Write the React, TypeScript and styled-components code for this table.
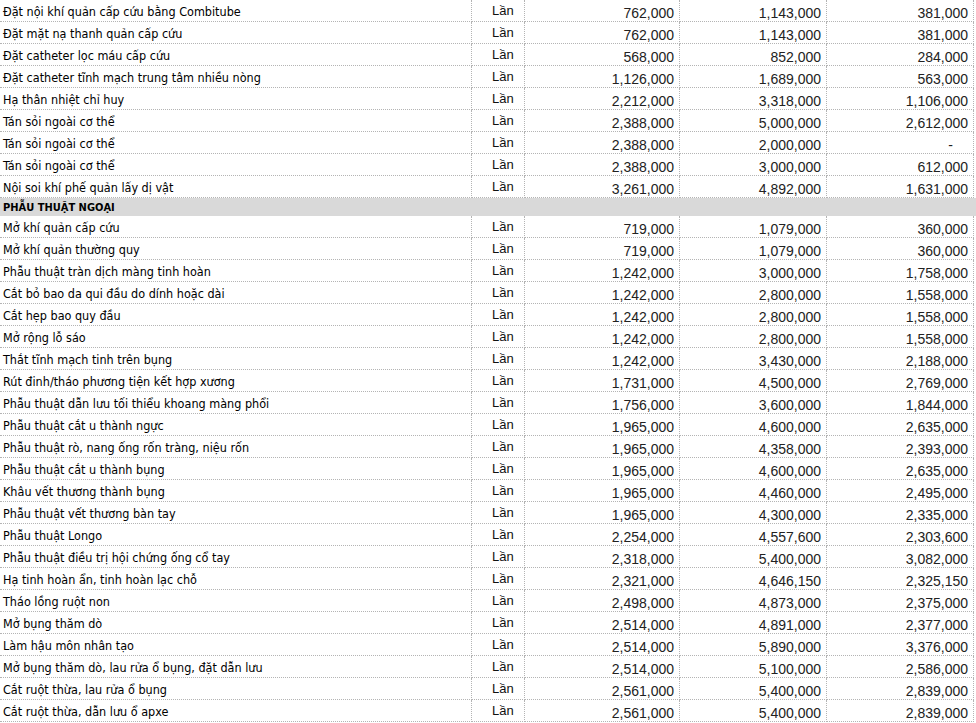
import React from "react";
import styled, { createGlobalStyle } from "styled-components";

const Global = createGlobalStyle`
  html, body { margin: 0; padding: 0; background: #fff; }
  body { width: 976px; height: 723px; overflow: hidden; }
`;

type Row = { name: string; p1: string; p2: string; p3: string };
type Item = Row | { header: string };

const rows: Item[] = [
  { name: "Đặt nội khí quản cấp cứu bằng Combitube", p1: "762,000", p2: "1,143,000", p3: "381,000" },
  { name: "Đặt mặt nạ thanh quản cấp cứu", p1: "762,000", p2: "1,143,000", p3: "381,000" },
  { name: "Đặt catheter lọc máu cấp cứu", p1: "568,000", p2: "852,000", p3: "284,000" },
  { name: "Đặt catheter tĩnh mạch trung tâm nhiều nòng", p1: "1,126,000", p2: "1,689,000", p3: "563,000" },
  { name: "Hạ thân nhiệt chỉ huy", p1: "2,212,000", p2: "3,318,000", p3: "1,106,000" },
  { name: "Tán sỏi ngoài cơ thể", p1: "2,388,000", p2: "5,000,000", p3: "2,612,000" },
  { name: "Tán sỏi ngoài cơ thể", p1: "2,388,000", p2: "2,000,000", p3: "-" },
  { name: "Tán sỏi ngoài cơ thể", p1: "2,388,000", p2: "3,000,000", p3: "612,000" },
  { name: "Nội soi khí phế quản lấy dị vật", p1: "3,261,000", p2: "4,892,000", p3: "1,631,000" },
  { header: "PHẪU THUẬT NGOẠI" },
  { name: "Mở khí quản cấp cứu", p1: "719,000", p2: "1,079,000", p3: "360,000" },
  { name: "Mở khí quản thường quy", p1: "719,000", p2: "1,079,000", p3: "360,000" },
  { name: "Phẫu thuật tràn dịch màng tinh hoàn", p1: "1,242,000", p2: "3,000,000", p3: "1,758,000" },
  { name: "Cắt bỏ bao da qui đầu do dính hoặc dài", p1: "1,242,000", p2: "2,800,000", p3: "1,558,000" },
  { name: "Cắt hẹp bao quy đầu", p1: "1,242,000", p2: "2,800,000", p3: "1,558,000" },
  { name: "Mở rộng lỗ sáo", p1: "1,242,000", p2: "2,800,000", p3: "1,558,000" },
  { name: "Thắt tĩnh mạch tinh trên bụng", p1: "1,242,000", p2: "3,430,000", p3: "2,188,000" },
  { name: "Rút đinh/tháo phương tiện kết hợp xương", p1: "1,731,000", p2: "4,500,000", p3: "2,769,000" },
  { name: "Phẫu thuật dẫn lưu tối thiểu khoang màng phổi", p1: "1,756,000", p2: "3,600,000", p3: "1,844,000" },
  { name: "Phẫu thuật cắt u thành ngực", p1: "1,965,000", p2: "4,600,000", p3: "2,635,000" },
  { name: "Phẫu thuật rò, nang ống rốn tràng, niệu rốn", p1: "1,965,000", p2: "4,358,000", p3: "2,393,000" },
  { name: "Phẫu thuật cắt u thành bụng", p1: "1,965,000", p2: "4,600,000", p3: "2,635,000" },
  { name: "Khâu vết thương thành bụng", p1: "1,965,000", p2: "4,460,000", p3: "2,495,000" },
  { name: "Phẫu thuật vết thương bàn tay", p1: "1,965,000", p2: "4,300,000", p3: "2,335,000" },
  { name: "Phẫu thuật Longo", p1: "2,254,000", p2: "4,557,600", p3: "2,303,600" },
  { name: "Phẫu thuật điều trị hội chứng ống cổ tay", p1: "2,318,000", p2: "5,400,000", p3: "3,082,000" },
  { name: "Hạ tinh hoàn ẩn, tinh hoàn lạc chỗ", p1: "2,321,000", p2: "4,646,150", p3: "2,325,150" },
  { name: "Tháo lồng ruột non", p1: "2,498,000", p2: "4,873,000", p3: "2,375,000" },
  { name: "Mở bụng thăm dò", p1: "2,514,000", p2: "4,891,000", p3: "2,377,000" },
  { name: "Làm hậu môn nhân tạo", p1: "2,514,000", p2: "5,890,000", p3: "3,376,000" },
  { name: "Mở bụng thăm dò, lau rửa ổ bụng, đặt dẫn lưu", p1: "2,514,000", p2: "5,100,000", p3: "2,586,000" },
  { name: "Cắt ruột thừa, lau rửa ổ bụng", p1: "2,561,000", p2: "5,400,000", p3: "2,839,000" },
  { name: "Cắt ruột thừa, dẫn lưu ổ apxe", p1: "2,561,000", p2: "5,400,000", p3: "2,839,000" },
];

const Sheet = styled.div`
  display: flex;
  flex-direction: column;
  width: 976px;
`;

const DataRow = styled.div`
  display: grid;
  grid-template-columns: 472px 53px 155px 147px 147px;
  height: 22px;
`;

const Cell = styled.div`
  box-sizing: border-box;
  height: 22px;
  border-right: 1px dotted #b4b4b4;
  border-bottom: 1px dotted #b4b4b4;
  display: flex;
  align-items: flex-end;
  padding-bottom: 2px;
  overflow: hidden;
  white-space: nowrap;
  color: #111;
`;

const NameCell = styled(Cell)`
  font-family: "DejaVu Sans Condensed", "DejaVu Sans", sans-serif;
  font-size: 12.5px;
  padding-left: 3px;
  padding-bottom: 2px;
  color: #000;
`;

const UnitCell = styled(Cell)`
  font-family: "Liberation Sans", Arial, sans-serif;
  font-size: 13px;
  padding-left: 20px;
  padding-bottom: 3px;
`;

const NumCell = styled(Cell)<{ $dash?: boolean }>`
  font-family: "Liberation Sans", Arial, sans-serif;
  font-size: 14px;
  justify-content: flex-end;
  padding-right: ${(p) => (p.$dash ? "20px" : "5px")};
  padding-bottom: 0px;
  color: #222;
`;

const HeaderRow = styled.div`
  box-sizing: border-box;
  height: 18px;
  background: #d9d9d9;
  display: flex;
  align-items: center;
  padding-left: 3px;
  font-family: "DejaVu Sans Condensed", "DejaVu Sans", sans-serif;
  font-weight: bold;
  font-size: 11px;
  color: #000;
`;

export default function App() {
  return (
    <>
      <Global />
      <Sheet>
        {rows.map((r, i) =>
          "header" in r ? (
            <HeaderRow key={i}>{r.header}</HeaderRow>
          ) : (
            <DataRow key={i}>
              <NameCell>{r.name}</NameCell>
              <UnitCell>Lần</UnitCell>
              <NumCell>{r.p1}</NumCell>
              <NumCell>{r.p2}</NumCell>
              <NumCell $dash={r.p3 === "-"}>{r.p3}</NumCell>
            </DataRow>
          )
        )}
      </Sheet>
    </>
  );
}
